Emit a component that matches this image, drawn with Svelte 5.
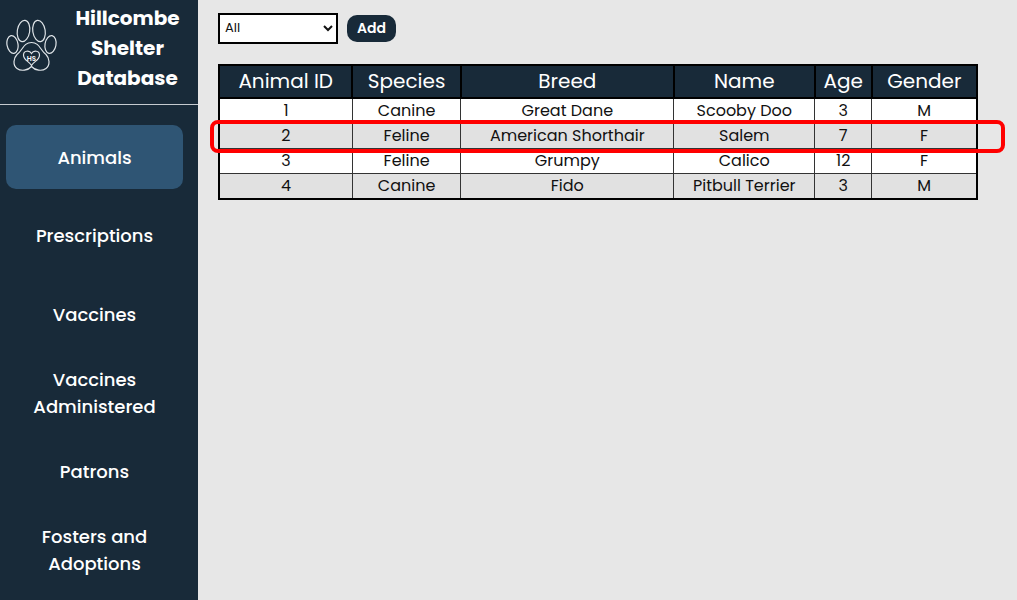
<script>
  const links = ['Animals', 'Prescriptions', 'Vaccines', 'Vaccines Administered', 'Patrons', 'Fosters and Adoptions'];
  const columns = [
    { name: 'Animal ID', share: 17.6 },
    { name: 'Species', share: 14.3 },
    { name: 'Breed', share: 28.1 },
    { name: 'Name', share: 18.6 },
    { name: 'Age', share: 7.5 },
    { name: 'Gender', share: 13.9 }
  ];
  const animals = [
    [1, 'Canine', 'Great Dane', 'Scooby Doo', 3, 'M'],
    [2, 'Feline', 'American Shorthair', 'Salem', 7, 'F'],
    [3, 'Feline', 'Grumpy', 'Calico', 12, 'F'],
    [4, 'Canine', 'Fido', 'Pitbull Terrier', 3, 'M']
  ];
  let active = $state('Animals');
  let filter = $state('All');
</script>

<div class="page">
  <aside>
    <header>
      <svg class="logo" viewBox="0 0 52 54" fill="none" stroke="#dfe4e8" stroke-width="1.2" aria-hidden="true">
        <ellipse cx="17.5" cy="12" rx="6.2" ry="10.7" transform="rotate(9 17.5 12)" />
        <ellipse cx="33" cy="12" rx="6.2" ry="10.7" transform="rotate(-9 33 12)" />
        <ellipse cx="6.5" cy="25.5" rx="5.5" ry="9" transform="rotate(-10 6.5 25.5)" />
        <ellipse cx="44.5" cy="25.5" rx="5.5" ry="9" transform="rotate(10 44.5 25.5)" />
        <path d="M25.5 47.5C22 51.5 15 52.500 11 49.500C6.500 46 7.500 39 11 35.500C17 31 17.500 23.500 25.500 23.500C33.500 23.500 34 31 40 35.500C43.500 39 44.500 46 40 49.500C36 52.500 29 51.500 25.500 47.500Z" />
        <path d="M25.500 46.500C23 42 17.500 41.500 17.500 36C17.500 31.500 23.500 31 25.500 34.500C27.500 31 33.500 31.500 33.500 36C33.500 41.500 28 42 25.500 46.500Z" />
        <text x="25.500" y="41.500" text-anchor="middle">HS</text>
      </svg>
      <h1>Hillcombe Shelter Database</h1>
    </header>
    <nav>
      {#each links as link}
        <button class:active={active === link} onclick={() => (active = link)}>{link}</button>
      {/each}
    </nav>
  </aside>

  <main>
    <div class="tools">
      <select aria-label="Filter animals" bind:value={filter}>
        <option>All</option>
        <option>Canine</option>
        <option>Feline</option>
      </select>
      <button class="add">Add</button>
    </div>
    <div class="records">
      <table>
        <colgroup>
          {#each columns as column}
            <col style="width: {column.share}%" />
          {/each}
        </colgroup>
        <thead>
          <tr>
            {#each columns as column}
              <th scope="col">{column.name}</th>
            {/each}
          </tr>
        </thead>
        <tbody>
          {#each animals as animal}
            <tr>
              {#each animal as value}
                <td>{value}</td>
              {/each}
            </tr>
          {/each}
        </tbody>
      </table>
      <div class="marker"></div>
    </div>
  </main>
</div>

<style>
  :global(body) {
    margin: 0;
    background: #e7e7e7;
  }

  .page {
    display: flex;
    min-height: 100vh;
    font-family: Poppins, Inter, sans-serif;
  }

  aside {
    display: flex;
    flex-direction: column;
    flex: 0 0 198px;
    background: #182a39;
    color: #fff;
  }

  header {
    display: flex;
    align-items: center;
    gap: 11px;
    height: 104px;
    padding: 0 12px 0 6px;
    border-bottom: 1px solid #c5cad0;
  }

  .logo {
    flex: none;
    width: 52px;
    height: 54px;
    margin-bottom: 12px;
  }

  .logo text {
    fill: #fff;
    stroke: none;
    font-size: 7px;
    font-weight: 600;
  }

  h1 {
    flex: 1;
    margin: 0 0 8px;
    font-size: 20px;
    line-height: 30px;
    font-weight: 700;
    text-align: center;
  }

  nav {
    display: flex;
    flex: 1;
    flex-direction: column;
    justify-content: space-between;
    padding: 20px 15px 18px 6px;
  }

  nav button {
    min-height: 64px;
    padding: 4px 16px;
    border: 0;
    border-radius: 10px;
    background: transparent;
    color: #fff;
    font: 500 18px/27px Poppins, Inter, sans-serif;
    cursor: pointer;
  }

  nav .active {
    background: #2f5574;
  }

  main {
    flex: 1;
    padding: 13px 39px 20px 20px;
  }

  .tools {
    display: flex;
    align-items: center;
    gap: 9px;
    margin-bottom: 20px;
  }

  select {
    width: 120px;
    height: 31px;
    padding: 0 1px 2px;
    border: 2px solid #000;
    border-radius: 0;
    background: #fff;
    color: #111;
    font: 13px Poppins, Inter, sans-serif;
  }

  .add {
    height: 27px;
    padding: 0 10px;
    border: 0;
    border-radius: 10px;
    background: #182a39;
    color: #fff;
    font: 600 14px Poppins, Inter, sans-serif;
    cursor: pointer;
  }

  .records {
    position: relative;
  }

  table {
    width: 100%;
    border: 2px solid #000;
    border-collapse: collapse;
    table-layout: fixed;
    color: #111;
    text-align: center;
  }

  th {
    padding: 0;
    border: 2px solid #000;
    background: #182a39;
    color: #fff;
    font-size: 20px;
    line-height: 31px;
    font-weight: 400;
  }

  td {
    height: 24px;
    padding: 0;
    border: 1px solid #333;
    font-size: 16px;
    line-height: 24px;
  }

  tbody tr {
    background: #fff;
  }

  tbody tr:nth-child(even) {
    background: #e1e1e1;
  }

  .marker {
    position: absolute;
    top: 56px;
    right: -27px;
    left: -8px;
    height: 25px;
    border: 4px solid #f00;
    border-radius: 8px;
    pointer-events: none;
  }
</style>
